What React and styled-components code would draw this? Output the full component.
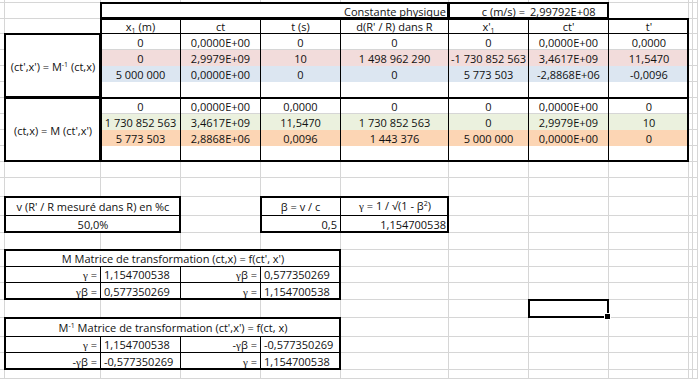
import React from 'react';
import styled, { createGlobalStyle } from 'styled-components';

const COLS = [5, 96, 80, 80, 80, 108, 80, 80, 80, 4, 5];
const ROWS = [3, 16, 15, 16, 16, 16, 16, 16, 16, 16, 16, 16, 19, 19, 17, 17, 17, 16, 17, 18, 19, 16, 17, 9];

const PINK = '#f2dcdb';
const BLUE = '#dce6f1';
const GREEN = '#ebf1de';
const ORANGE = '#fcd5b4';

const GlobalStyle = createGlobalStyle`
  html, body {
    margin: 0;
    padding: 0;
    background: #fff;
  }
  body {
    font-family: "Open Sans", "Liberation Sans", sans-serif;
  }
`;

const Sheet = styled.div`
  display: grid;
  grid-template-columns: ${COLS.map((w) => `${w}px`).join(' ')};
  grid-template-rows: ${ROWS.map((h) => `${h}px`).join(' ')};
  width: 698px;
  height: 379px;
  overflow: hidden;
  font-size: 11px;
  color: #111;
`;

const GridCell = styled.div`
  grid-column: ${(p) => p.$c};
  grid-row: ${(p) => p.$r};
  box-sizing: border-box;
  border-right: 1px solid #d6d6d6;
  border-bottom: 1px solid #d6d6d6;
`;

const Box = styled.div`
  grid-column: ${(p) => p.$c} / span ${(p) => p.$cs || 1};
  grid-row: ${(p) => p.$r} / span ${(p) => p.$rs || 1};
  box-sizing: border-box;
  display: flex;
  align-items: center;
  justify-content: ${(p) => (p.$align === 'left' ? 'flex-start' : p.$align === 'right' ? 'flex-end' : 'center')};
  padding: 0 3px;
  background: ${(p) => p.$fill || 'transparent'};
  border-right: ${(p) => (p.$br ? '1px solid #000' : 'none')};
  border-bottom: ${(p) => (p.$bb ? '1px solid #000' : 'none')};
  white-space: pre;
  line-height: 1;
  z-index: 1;
`;

const Text = styled.span`
  white-space: pre;
`;

function Cell({ children, ...rest }) {
  return (
    <Box {...rest}>
      <Text>{children}</Text>
    </Box>
  );
}

const Split = styled.div`
  display: grid;
  grid-template-columns: 80px 80px;
  width: 100%;
  margin: 0 -3px;
`;

const Half = styled.span`
  text-align: ${(p) => p.$align};
  padding: 0 ${(p) => (p.$align === 'right' ? '4px' : '1px')};
`;

const Frame = styled.div`
  grid-column: ${(p) => p.$c} / span ${(p) => p.$cs || 1};
  grid-row: ${(p) => p.$r} / span ${(p) => p.$rs || 1};
  box-sizing: border-box;
  margin: -1px 0 0 -1px;
  border: 2px solid #000;
  pointer-events: none;
  z-index: 2;
`;

const Selection = styled(Frame)`
  position: relative;
  &::after {
    content: '';
    position: absolute;
    right: -4px;
    bottom: -4px;
    width: 5px;
    height: 5px;
    background: #000;
    border: 1px solid #fff;
  }
`;

const Sub = styled.sub`
  font-size: 7px;
  vertical-align: -2px;
  line-height: 0;
`;

const Sup = styled.sup`
  font-size: 7px;
  vertical-align: 4px;
  line-height: 0;
`;

const Greek = styled.span`
  font-family: "Liberation Serif", "DejaVu Serif", serif;
  font-size: 11px;
`;

const HEADERS = [
  <>x<Sub>1</Sub> (m)</>,
  'ct',
  't (s)',
  "d(R' / R) dans R",
  <>x'<Sub>1</Sub></>,
  "ct'",
  "t'",
];

const EMPTY = ['', '', '', '', '', '', ''];

const UPPER = [
  { vals: ['0', '0,0000E+00', '0', '0', '0', '0,0000E+00', '0,0000'] },
  { fill: PINK, vals: ['0', '2,9979E+09', '10', '1 498 962 290', '-1 730 852 563', '3,4617E+09', '11,5470'] },
  { fill: BLUE, vals: ['5 000 000', '0,0000E+00', '0', '0', '5 773 503', '-2,8868E+06', '-0,0096'] },
  { vals: EMPTY },
];

const LOWER = [
  { vals: ['0', '0,0000E+00', '0,0000', '0', '0', '0,0000E+00', '0'] },
  { fill: GREEN, vals: ['1 730 852 563', '3,4617E+09', '11,5470', '1 730 852 563', '0', '2,9979E+09', '10'] },
  { fill: ORANGE, vals: ['5 773 503', '2,8868E+06', '0,0096', '1 443 376', '5 000 000', '0,0000E+00', '0'] },
  { vals: EMPTY },
];

const g = <Greek>γ</Greek>;

const MATRIX = [
  [<>{g} =</>, '1,154700538', <>{g}β =</>, '0,577350269'],
  [<>{g}β =</>, '0,577350269', <>{g} =</>, '1,154700538'],
];

const INVERSE = [
  [<>{g} =</>, '1,154700538', <>-{g}β =</>, '-0,577350269'],
  [<>-{g}β =</>, '-0,577350269', <>{g} =</>, '1,154700538'],
];

function Background() {
  const cells = [];
  ROWS.forEach((_, r) => {
    COLS.forEach((__, c) => {
      cells.push(<GridCell key={`${r}-${c}`} $c={c + 1} $r={r + 1} />);
    });
  });
  return cells;
}

function DataRows({ rows, start }) {
  return rows.map((row, i) => row.vals.map((v, j) => (
    <Cell key={`${start + i}-${j}`} $c={3 + j} $r={start + i} $fill={row.fill} $br={j < 6}>
      {v}
    </Cell>
  )));
}

function MatrixBox({ title, rows, start }) {
  return (
    <>
      <Cell $c={2} $cs={4} $r={start} $fill="#fff" $bb>{title}</Cell>
      {rows.map((row, i) => row.map((v, j) => (
        <Cell
          key={`${start}-${i}-${j}`}
          $c={2 + j}
          $r={start + 1 + i}
          $fill="#fff"
          $align={j % 2 === 0 ? 'right' : 'left'}
          $br={j < 3}
          $bb={i === 0}
        >
          {v}
        </Cell>
      )))}
      <Frame $c={2} $cs={4} $r={start} $rs={3} />
    </>
  );
}

export default function App() {
  return (
    <>
      <GlobalStyle />
      <Sheet>
        <Background />

        <Cell $c={3} $cs={4} $r={2} $fill="#fff" $align="right">Constante physique</Cell>
        <Box $c={7} $cs={2} $r={2} $fill="#fff" $align="left">
          <Split>
            <Half $align="right">c (m/s) =</Half>
            <Half $align="left">2,99792E+08</Half>
          </Split>
        </Box>
        <Frame $c={3} $cs={4} $r={2} />
        <Frame $c={7} $cs={2} $r={2} />

        {HEADERS.map((h, j) => (
          <Cell key={`h${j}`} $c={3 + j} $r={3} $br={j < 6} $bb>{h}</Cell>
        ))}

        <DataRows rows={UPPER} start={4} />
        <DataRows rows={LOWER} start={8} />

        <Cell $c={2} $r={4} $rs={4} $fill="#fff">(ct',x') = M<Sup>-1</Sup> (ct,x)</Cell>
        <Cell $c={2} $r={8} $rs={4} $fill="#fff">(ct,x) = M (ct',x')</Cell>
        <Frame $c={2} $r={4} $rs={4} />
        <Frame $c={2} $r={8} $rs={4} />
        <Frame $c={3} $cs={7} $r={3} $rs={9} />
        <Frame $c={3} $cs={7} $r={8} $rs={4} />

        <Cell $c={2} $cs={2} $r={14} $fill="#fff" $bb>v (R' / R mesuré dans R) en %c</Cell>
        <Cell $c={2} $cs={2} $r={15} $fill="#fff">50,0%</Cell>
        <Frame $c={2} $cs={2} $r={14} $rs={2} />

        <Cell $c={5} $r={14} $fill="#fff" $br $bb>β = v / c</Cell>
        <Cell $c={6} $r={14} $fill="#fff" $bb>{g} = 1 / √(1 - β<Sup>2</Sup>)</Cell>
        <Cell $c={5} $r={15} $fill="#fff" $br $align="right">0,5</Cell>
        <Cell $c={6} $r={15} $fill="#fff" $align="right">1,154700538</Cell>
        <Frame $c={5} $cs={2} $r={14} $rs={2} />

        <MatrixBox title="M Matrice de transformation (ct,x) = f(ct', x')" rows={MATRIX} start={17} />
        <MatrixBox
          title={<>M<Sup>-1</Sup> Matrice de transformation (ct',x') = f(ct, x)</>}
          rows={INVERSE}
          start={21}
        />

        <Selection $c={8} $r={20} />
      </Sheet>
    </>
  );
}
